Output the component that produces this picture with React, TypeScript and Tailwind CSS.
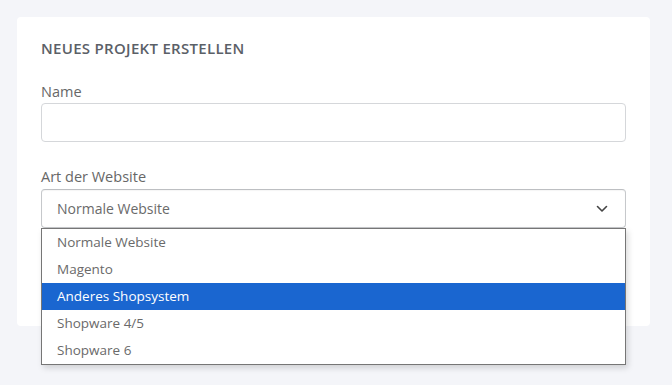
import React from "react";

const options = ["Normale Website", "Magento", "Anderes Shopsystem", "Shopware 4/5", "Shopware 6"];

const App = () => {
  return (
    <div className="min-h-[385px] w-[672px] bg-[#f4f5f9] pt-[17px] pl-[17px] font-['Open_Sans','Lato',sans-serif]">
      <div className="relative h-[309px] w-[633px] rounded-[4px] bg-white px-[24px] pt-[22px]">
        {/* Header */}
        <h2 className="text-[15px] leading-[18px] font-semibold tracking-[0.02em] text-[#5b6067]">
          NEUES PROJEKT ERSTELLEN
        </h2>

        {/* Name */}
        <label className="mt-[25px] mb-[1px] block text-[14.5px] leading-[20px] text-[#676767]">Name</label>
        <div className="h-[39px] w-[585px] rounded-[4px] border border-[#d5d7da] bg-white" />

        {/* Art der Website */}
        <label className="mt-[25px] mb-[2px] block text-[14.5px] leading-[20px] text-[#676767]">Art der Website</label>
        <div className="relative">
          <div className="flex h-[39px] w-[585px] items-center justify-between rounded-[4px] border border-[#c6c8cb] border-t-[#bdbfc2] bg-white pl-[15px] pr-[17px] shadow-[inset_0_1px_1px_rgba(0,0,0,0.04)]">
            <span className="text-[14px] text-[#6a6a6a]">Normale Website</span>
            <svg width="12" height="8" viewBox="0 0 12 8" fill="none">
              <path d="M1.5 1.5 L6 6 L10.5 1.5" stroke="#444" strokeWidth="1.6" strokeLinecap="round" strokeLinejoin="round" />
            </svg>
          </div>

          {/* Open dropdown */}
          <ul className="absolute top-[39px] left-0 z-10 w-[585px] border border-[#767676] bg-white shadow-[2px_3px_6px_rgba(0,0,0,0.15)]">
            {options.map((o) => (
              <li
                key={o}
                className={
                  o === "Anderes Shopsystem"
                    ? "flex h-[27px] items-center bg-[#1a66d0] pl-[15px] text-[13.5px] text-white"
                    : "flex h-[27px] items-center pl-[15px] text-[13.5px] text-[#6a6a6a]"
                }
              >
                {o}
              </li>
            ))}
          </ul>
        </div>
      </div>
    </div>
  );
};

export default App;
